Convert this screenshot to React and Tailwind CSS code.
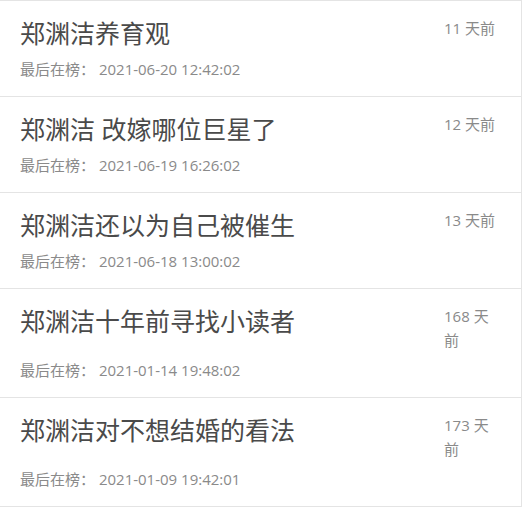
const ITEMS = [
  { title: '郑渊洁养育观', last: '2021-06-20 12:42:02', ago: '11 天前' },
  { title: '郑渊洁 改嫁哪位巨星了', last: '2021-06-19 16:26:02', ago: '12 天前' },
  { title: '郑渊洁还以为自己被催生', last: '2021-06-18 13:00:02', ago: '13 天前' },
  { title: '郑渊洁十年前寻找小读者', last: '2021-01-14 19:48:02', ago: '168 天前' },
  { title: '郑渊洁对不想结婚的看法', last: '2021-01-09 19:42:01', ago: '173 天前' },
];

function Row({ item }) {
  return (
    <li className="border-b border-[#e4e4e4] pl-5 pr-[21px] pt-[15px] pb-[15px]">
      <div className="flex items-start">
        <div className="flex-1 text-[25px] leading-[35px] text-[#4a4a4a]">{item.title}</div>
        <div className="w-[56px] text-[15px] leading-6 text-[#8a8a8a]">{item.ago}</div>
      </div>
      <div className="mt-[6px] text-[15px] leading-6 text-[#8a8a8a]">最后在榜： {item.last}</div>
    </li>
  );
}

export default function App() {
  return (
    <div
      className="w-[522px] bg-white"
      style={{ fontFamily: '"Open Sans", "Noto Sans CJK SC", sans-serif' }}
    >
      <ul className="border-t border-r border-[#e4e4e4]">
        {ITEMS.map((it) => (
          <Row key={it.title} item={it} />
        ))}
      </ul>
    </div>
  );
}
